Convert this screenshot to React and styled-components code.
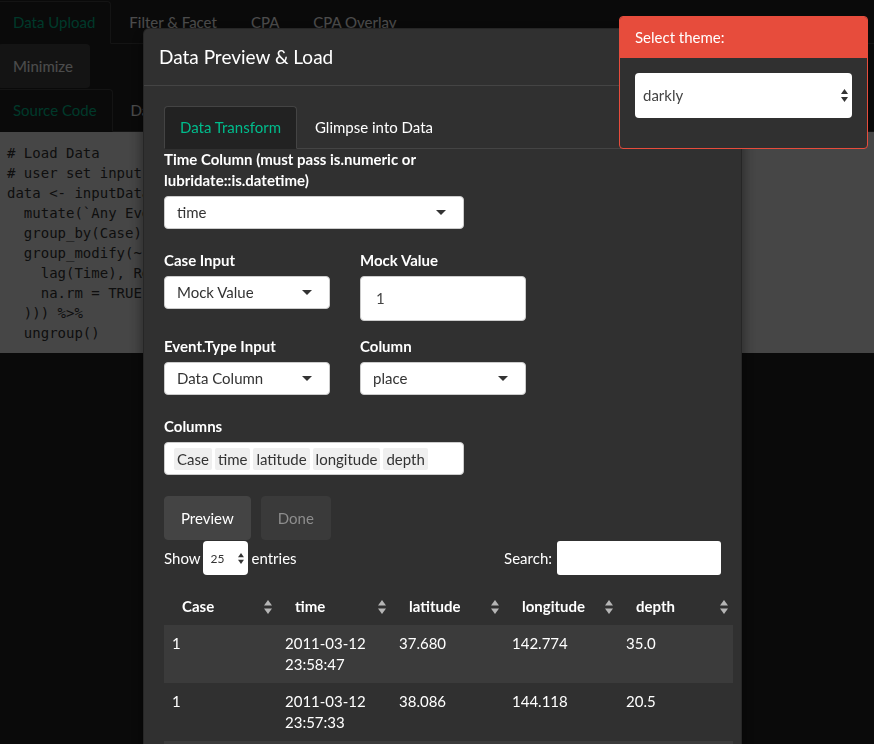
import React from 'react';
import styled, { createGlobalStyle } from 'styled-components';

const GlobalStyle = createGlobalStyle`
    * {
        box-sizing: border-box;
    }

    html,
    body {
        margin: 0;
        height: 744px;
        overflow: hidden;
        background-color: #222222;
    }

    body {
        font-family: Lato, 'Open Sans', sans-serif;
        font-size: 15px;
        line-height: 21px;
        color: #ffffff;
    }
`;

// page behind the modal
const Page = styled.div`
    padding-top: 1px;
`;

const NavTabs = styled.ul`
    display: flex;
    margin: ${p => (p.$top ? `${p.$top}px` : '0')} 0 0 ${p => (p.$inset ? '-3px' : '0')};
    padding: 0;
    list-style: none;
    border-bottom: 1px solid #444444;
`;

const Tab = styled.li`
    margin: 0 2px -1px 0;
    padding: 10px 15px;
    line-height: 21px;
    white-space: nowrap;
    border: 1px solid ${p => (p.$active ? '#444444' : 'transparent')};
    border-bottom-color: ${p => (p.$active ? '#222222' : 'transparent')};
    border-radius: 4px 4px 0 0;
    background-color: ${p => (p.$active ? '#222222' : 'transparent')};
    color: ${p => (p.$active ? '#00bc8c' : '#ffffff')};
`;

const MinimizeButton = styled.button`
    display: flex;
    align-items: center;
    height: 44px;
    margin-left: -2px;
    padding: 0 17px 0 15px;
    border: none;
    border-radius: 4px;
    background-color: #444444;
    color: #ffffff;
    font: inherit;
`;

const Code = styled.pre`
    margin: 0;
    padding: 11px 7px 10px;
    background-color: #ebebeb;
    color: #333333;
    font-family: 'DejaVu Sans Mono', monospace;
    font-size: 14px;
    line-height: 20px;
    white-space: pre;
    overflow: hidden;
`;

const Backdrop = styled.div`
    position: fixed;
    inset: 0;
    background-color: rgba(0, 0, 0, 0.7);
`;

// modal
const Modal = styled.div`
    position: fixed;
    top: 28px;
    left: 143px;
    width: 599px;
    background-color: #303030;
    border: 1px solid rgba(0, 0, 0, 0.2);
    border-radius: 6px;
    box-shadow: 0 5px 15px rgba(0, 0, 0, 0.5);
`;

const ModalHeader = styled.div`
    padding: 15px;
    border-bottom: 1px solid #444444;
`;

const ModalTitle = styled.h4`
    margin: 0;
    font-size: 19px;
    font-weight: 400;
    line-height: 26px;
`;

const ModalBody = styled.div`
    padding: 20px;
`;

const InnerTabs = styled(NavTabs)`
    margin-right: -20px;
`;

const FormGroup = styled.div`
    width: ${p => p.$width || 'auto'};
    margin-bottom: ${p => p.$mb ?? 21}px;
`;

const Label = styled.label`
    display: block;
    margin-bottom: 5px;
    font-weight: 700;
    line-height: 21px;
`;

const FieldRow = styled.div`
    display: grid;
    grid-template-columns: 166px 166px;
    column-gap: 30px;
    align-items: start;
    margin-bottom: ${p => p.$mb}px;
`;

const SelectBox = styled.div`
    display: flex;
    align-items: center;
    height: 33px;
    padding: 0 17px 0 12px;
    background-color: #ffffff;
    border: 1px solid #cccccc;
    border-radius: 4px;
    color: #333333;
`;

const Caret = styled.span`
    margin-left: auto;
    width: 0;
    height: 0;
    border-style: solid;
    border-width: 5px 5px 0 5px;
    border-color: #333333 transparent transparent transparent;
`;

const TextInput = styled.div`
    display: flex;
    align-items: center;
    height: 45px;
    padding: 0 15px;
    background-color: #ffffff;
    border: 1px solid #cccccc;
    border-radius: 4px;
    color: #444444;
`;

const MultiBox = styled(SelectBox)`
    padding: 0 9px;
    gap: 3px;
`;

const Chip = styled.span`
    padding: 0 3px;
    line-height: 22px;
    background-color: #efefef;
    border-radius: 2px;
    color: #333333;
`;

const ButtonRow = styled.div`
    display: flex;
    gap: 10px;
    margin-bottom: 1px;
`;

const Button = styled.button`
    height: 44px;
    padding: 0 16px;
    border: 1px solid ${p => (p.disabled ? '#3a3a3a' : '#444444')};
    border-radius: 4px;
    background-color: ${p => (p.disabled ? '#3a3a3a' : '#444444')};
    color: ${p => (p.disabled ? '#8d8d8d' : '#ffffff')};
    font: inherit;
`;

const TableControls = styled.div`
    display: flex;
    align-items: center;
    justify-content: space-between;
    height: 34px;
    line-height: 19px;
`;

const InlineGroup = styled.div`
    display: flex;
    align-items: center;
    gap: ${p => p.$gap}px;
`;

const LengthSelect = styled.div`
    display: flex;
    align-items: center;
    justify-content: space-between;
    width: 45px;
    height: 34px;
    margin: 0 4px 0 2px;
    padding: 0 4px 0 8px;
    background-color: #ffffff;
    border-radius: 4px;
    color: #333333;
    font-size: 12px;
`;

const SearchInput = styled.div`
    width: 164px;
    height: 34px;
    background-color: #ffffff;
    border-radius: 3px;
`;

const Table = styled.table`
    width: 569px;
    margin-top: 13px;
    border-collapse: collapse;
    table-layout: fixed;
`;

const HeadCell = styled.th`
    padding: 8px 5px 8px 18px;
    text-align: left;
    font-weight: 700;
`;

const HeadInner = styled.div`
    display: flex;
    align-items: center;
    justify-content: space-between;
`;

const Row = styled.tr`
    background-color: ${p => (p.$odd ? '#3b3b3b' : '#303030')};
`;

const Cell = styled.td`
    padding: 8px;
    vertical-align: top;
`;

// theme selector
const ThemePanel = styled.div`
    position: fixed;
    top: 16px;
    left: 619px;
    width: 249px;
    border: 1px solid #e74c3c;
    border-radius: 4px;
    background-color: #303030;
    overflow: hidden;
`;

const ThemeHeader = styled.div`
    padding: 10px 15px;
    background-color: #e74c3c;
    color: #ffffff;
`;

const ThemeBody = styled.div`
    padding: 15px 15px 30px;
`;

const ThemeSelect = styled.div`
    display: flex;
    align-items: center;
    justify-content: space-between;
    height: 45px;
    padding: 0 4px 0 8px;
    background-color: #ffffff;
    border-radius: 4px;
    color: #444444;
`;

const SortIcon = ({ color = '#b5b5b5' }) => (
    <svg width="8" height="14" viewBox="0 0 8 14">
        <polygon points="4,0 8,5.5 0,5.5" fill={color} />
        <polygon points="0,8.5 8,8.5 4,14" fill={color} />
    </svg>
);

const SpinArrows = ({ w = 7, h = 13 }) => (
    <svg width={w} height={h} viewBox="0 0 7 13">
        <polygon points="3.5,0 7,5 0,5" fill="#333333" />
        <polygon points="0,8 7,8 3.5,13" fill="#333333" />
    </svg>
);

const codeText = `# Load Data
# user set input values
data <- inputData %>%
  mutate(\`Any Event\` = 1) %>%
  group_by(Case) %>%
  group_modify(~ mutate(.x, Time = as.numeric(Time -
    lag(Time), Relative = cumsum(replace(Time,
    na.rm = TRUE
  ))) %>%
  ungroup()`;

const columns = ['Case', 'time', 'latitude', 'longitude', 'depth'];
const colWidths = [113, 114, 113, 114, 115];

const rows = [
    ['1', '2011-03-12 23:58:47', '37.680', '142.774', '35.0'],
    ['1', '2011-03-12 23:57:33', '38.086', '144.118', '20.5'],
    ['1', '2011-03-12 23:52:21', '36.985', '141.311', '24.3'],
    ['1', '2011-03-12 23:47:19', '37.271', '142.005', '25.1'],
];

const App = () => {
    return (
        <>
            <GlobalStyle />
            <Page>
                <NavTabs $inset>
                    <Tab $active>Data Upload</Tab>
                    <Tab>Filter &amp; Facet</Tab>
                    <Tab>CPA</Tab>
                    <Tab>CPA Overlay</Tab>
                </NavTabs>
                <MinimizeButton>Minimize</MinimizeButton>
                <NavTabs $inset $top={1}>
                    <Tab $active>Source Code</Tab>
                    <Tab>Data Preview</Tab>
                </NavTabs>
                <Code>{codeText}</Code>
            </Page>

            <Backdrop />

            <Modal>
                <ModalHeader>
                    <ModalTitle>Data Preview &amp; Load</ModalTitle>
                </ModalHeader>
                <ModalBody>
                    <InnerTabs>
                        <Tab $active>Data Transform</Tab>
                        <Tab>Glimpse into Data</Tab>
                    </InnerTabs>

                    <FormGroup $width="300px">
                        <Label>Time Column (must pass is.numeric or lubridate::is.datetime)</Label>
                        <SelectBox>
                            time
                            <Caret />
                        </SelectBox>
                    </FormGroup>

                    <FieldRow $mb={15}>
                        <div>
                            <Label>Case Input</Label>
                            <SelectBox>
                                Mock Value
                                <Caret />
                            </SelectBox>
                        </div>
                        <div>
                            <Label>Mock Value</Label>
                            <TextInput>1</TextInput>
                        </div>
                    </FieldRow>

                    <FieldRow $mb={21}>
                        <div>
                            <Label>Event.Type Input</Label>
                            <SelectBox>
                                Data Column
                                <Caret />
                            </SelectBox>
                        </div>
                        <div>
                            <Label>Column</Label>
                            <SelectBox>
                                place
                                <Caret />
                            </SelectBox>
                        </div>
                    </FieldRow>

                    <FormGroup $width="300px">
                        <Label>Columns</Label>
                        <MultiBox>
                            {columns.map(c => (
                                <Chip key={c}>{c}</Chip>
                            ))}
                        </MultiBox>
                    </FormGroup>

                    <ButtonRow>
                        <Button>Preview</Button>
                        <Button disabled>Done</Button>
                    </ButtonRow>

                    <TableControls>
                        <InlineGroup $gap={0}>
                            Show
                            <LengthSelect>
                                25
                                <SpinArrows w={6} h={11} />
                            </LengthSelect>
                            entries
                        </InlineGroup>
                        <InlineGroup $gap={5}>
                            Search:
                            <SearchInput />
                        </InlineGroup>
                    </TableControls>

                    <Table>
                        <colgroup>
                            {colWidths.map((w, i) => (
                                <col key={i} style={{ width: w }} />
                            ))}
                        </colgroup>
                        <thead>
                            <tr>
                                {columns.map(c => (
                                    <HeadCell key={c}>
                                        <HeadInner>
                                            {c}
                                            <SortIcon />
                                        </HeadInner>
                                    </HeadCell>
                                ))}
                            </tr>
                        </thead>
                        <tbody>
                            {rows.map((r, i) => (
                                <Row key={i} $odd={i % 2 === 0}>
                                    {r.map((v, j) => (
                                        <Cell key={j}>{v}</Cell>
                                    ))}
                                </Row>
                            ))}
                        </tbody>
                    </Table>
                </ModalBody>
            </Modal>

            <ThemePanel>
                <ThemeHeader>Select theme:</ThemeHeader>
                <ThemeBody>
                    <ThemeSelect>
                        darkly
                        <SpinArrows />
                    </ThemeSelect>
                </ThemeBody>
            </ThemePanel>
        </>
    );
};

export default App;
